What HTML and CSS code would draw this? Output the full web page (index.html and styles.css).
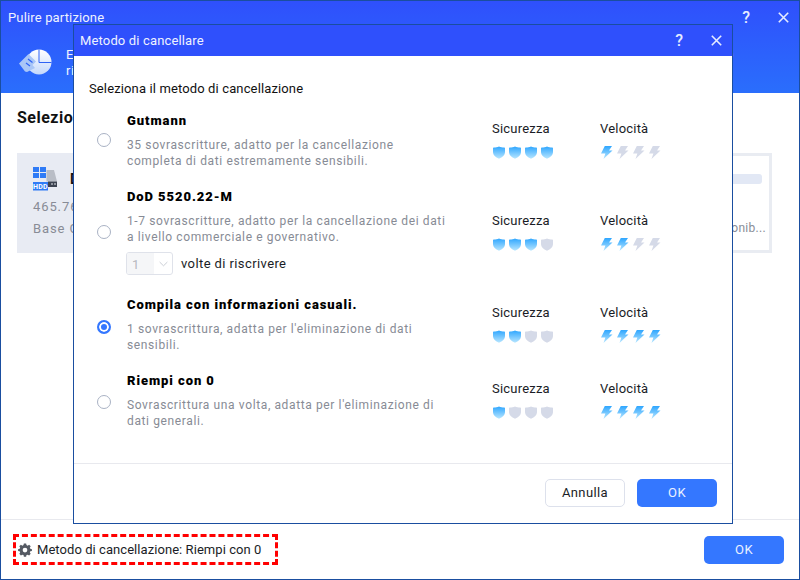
FILE: index.html
```html
<!DOCTYPE html>
<html lang="it">
<head>
<meta charset="utf-8">
<title>Pulire partizione</title>
<link rel="stylesheet" href="styles.css">
</head>
<body>
<svg class="defs" width="0" height="0" aria-hidden="true">
  <defs>
    <linearGradient id="gb" x1="0" y1="0" x2="0" y2="1">
      <stop offset="0" stop-color="#2ea6ff"/>
      <stop offset="1" stop-color="#b8e6ff"/>
    </linearGradient>
    <linearGradient id="gw" x1="0" y1="0" x2="0" y2="1">
      <stop offset="0" stop-color="#ffffff"/>
      <stop offset="1" stop-color="#c4d8fb"/>
    </linearGradient>
    <symbol id="shield" viewBox="0 0 12 13">
      <path d="M6 .4C7.5 1.1 9.5 1.4 11 1.4 11.6 1.4 12 1.8 12 2.4V6.2C12 9.2 9.5 11.3 6 12.7 2.5 11.3 0 9.2 0 6.2V2.4C0 1.8.4 1.4 1 1.4 2.5 1.4 4.5 1.1 6 .4Z"/>
    </symbol>
    <symbol id="bolt" viewBox="0 0 12 13">
      <path d="M3.8 0H11L8 4.6H11.5L2.5 13 4.4 7.6H0Z"/>
    </symbol>
  </defs>
</svg>
<div class="window">
  <header class="win-head">
    <div class="titlebar">
      <span class="title">Pulire partizione</span>
      <span class="controls">
        <span class="ctl">?</span>
        <svg class="close" viewBox="0 0 11 11"><path d="M.8.8 10.2 10.2M10.2.8.8 10.2"/></svg>
      </span>
    </div>
    <div class="intro">
      <svg class="intro-icon" viewBox="0 0 34 28">
        <circle class="pie-w" cx="21" cy="14" r="12.5"/>
        <path class="pie-l" d="M21 1.5V14.5H33.5"/>
        <path class="pie-t" d="M1 15.5 10.5 6 18 13.5 14.5 17 17 20 9 24 7 23.5Z"/>
        <path class="pie-d" d="M10 11 14.5 14.5M8 15 12 18"/>
      </svg>
      <div class="intro-text">
        <p class="intro-line"><span>E</span><span>)</span></p>
        <p class="intro-line">ri</p>
      </div>
    </div>
  </header>
  <main class="win-body">
    <h2 class="heading">Selezione</h2>
    <div class="cards">
      <div class="card-left">
        <div class="disk-head">
          <svg class="hdd" viewBox="0 0 24 24">
            <rect x="0" y="0" width="6" height="5" fill="#2f7bf6"/>
            <rect x="7" y="0" width="6" height="5" fill="#2f7bf6"/>
            <rect x="0" y="6" width="6" height="5" fill="#2f7bf6"/>
            <rect x="7" y="6" width="6" height="5" fill="#2f7bf6"/>
            <path d="M13.5 3H21L24 14.5H13.5Z" fill="#b9bdc6"/>
            <rect x="15" y="14.5" width="9" height="5.5" fill="#3c4250"/>
            <rect x="18" y="16.5" width="2" height="1" fill="#dfe3ea"/>
            <rect x="21" y="16.5" width="2" height="1" fill="#dfe3ea"/>
            <rect x="0" y="15" width="15" height="8.5" fill="#2f7bf6"/>
            <text x="7.5" y="22" class="hdd-t">HDD</text>
          </svg>
          <b class="disk-name">D</b>
        </div>
        <p class="disk-meta">465.76GB</p>
        <p class="disk-meta">Base GPT</p>
      </div>
      <div class="card-right">
        <div class="bar"></div>
        <p class="free">Disponib...</p>
      </div>
    </div>
  </main>
  <footer class="win-foot">
    <div class="method">
      <svg class="gear" viewBox="0 0 16 16"><path d="M6.7.5H9.3L9.7 2.4 11 3 12.7 2 14.5 3.8 13.5 5.4 14.1 6.7 15.9 7.1V9.1L14.1 9.5 13.5 10.9 14.5 12.4 12.7 14.2 11 13.3 9.7 13.8 9.3 15.7H6.7L6.3 13.8 5 13.3 3.3 14.2 1.5 12.4 2.5 10.9 1.9 9.5.1 9.1V7.1L1.9 6.7 2.5 5.4 1.5 3.8 3.3 2 5 3 6.3 2.4ZM8 5.4A2.7 2.7 0 1 0 8 10.8 2.7 2.7 0 1 0 8 5.4Z" fill-rule="evenodd"/></svg>
      <span>Metodo di cancellazione: Riempi con 0</span>
    </div>
    <button class="btn primary">OK</button>
  </footer>
</div>

<section class="dialog">
  <header class="dlg-head">
    <span class="title">Metodo di cancellare</span>
    <span class="controls">
      <span class="ctl">?</span>
      <svg class="close" viewBox="0 0 11 11"><path d="M.8.8 10.2 10.2M10.2.8.8 10.2"/></svg>
    </span>
  </header>
  <div class="dlg-body">
    <p class="lead">Seleziona il metodo di cancellazione</p>

    <div class="option o1">
      <span class="radio"></span>
      <div class="info">
        <h3 class="opt-title">Gutmann</h3>
        <p class="desc">35 sovrascritture, adatto per la cancellazione<br>completa di dati estremamente sensibili.</p>
      </div>
      <div class="rate">
        <span class="rate-label">Sicurezza</span>
        <div class="icons">
          <svg class="ic on"><use href="#shield"/></svg><svg class="ic on"><use href="#shield"/></svg><svg class="ic on"><use href="#shield"/></svg><svg class="ic on"><use href="#shield"/></svg>
        </div>
      </div>
      <div class="rate">
        <span class="rate-label">Velocità</span>
        <div class="icons">
          <svg class="ic on"><use href="#bolt"/></svg><svg class="ic"><use href="#bolt"/></svg><svg class="ic"><use href="#bolt"/></svg><svg class="ic"><use href="#bolt"/></svg>
        </div>
      </div>
    </div>

    <div class="option o2">
      <span class="radio"></span>
      <div class="info">
        <h3 class="opt-title">DoD 5520.22-M</h3>
        <p class="desc">1-7 sovrascritture, adatto per la cancellazione dei dati<br>a livello commerciale e governativo.</p>
        <div class="times">
          <span class="select"><span class="sel-val">1</span><span class="sel-arrow"><svg viewBox="0 0 10 6"><path d="M.7.8 5 5 9.3.8"/></svg></span></span>
          <span class="times-label">volte di riscrivere</span>
        </div>
      </div>
      <div class="rate">
        <span class="rate-label">Sicurezza</span>
        <div class="icons">
          <svg class="ic on"><use href="#shield"/></svg><svg class="ic on"><use href="#shield"/></svg><svg class="ic on"><use href="#shield"/></svg><svg class="ic"><use href="#shield"/></svg>
        </div>
      </div>
      <div class="rate">
        <span class="rate-label">Velocità</span>
        <div class="icons">
          <svg class="ic on"><use href="#bolt"/></svg><svg class="ic on"><use href="#bolt"/></svg><svg class="ic"><use href="#bolt"/></svg><svg class="ic"><use href="#bolt"/></svg>
        </div>
      </div>
    </div>

    <div class="option o3">
      <span class="radio checked"></span>
      <div class="info">
        <h3 class="opt-title">Compila con informazioni casuali.</h3>
        <p class="desc">1 sovrascrittura, adatta per l'eliminazione di dati<br>sensibili.</p>
      </div>
      <div class="rate">
        <span class="rate-label">Sicurezza</span>
        <div class="icons">
          <svg class="ic on"><use href="#shield"/></svg><svg class="ic on"><use href="#shield"/></svg><svg class="ic"><use href="#shield"/></svg><svg class="ic"><use href="#shield"/></svg>
        </div>
      </div>
      <div class="rate">
        <span class="rate-label">Velocità</span>
        <div class="icons">
          <svg class="ic on"><use href="#bolt"/></svg><svg class="ic on"><use href="#bolt"/></svg><svg class="ic on"><use href="#bolt"/></svg><svg class="ic on"><use href="#bolt"/></svg>
        </div>
      </div>
    </div>

    <div class="option o4">
      <span class="radio"></span>
      <div class="info">
        <h3 class="opt-title">Riempi con 0</h3>
        <p class="desc">Sovrascrittura una volta, adatta per l'eliminazione di<br>dati generali.</p>
      </div>
      <div class="rate">
        <span class="rate-label">Sicurezza</span>
        <div class="icons">
          <svg class="ic on"><use href="#shield"/></svg><svg class="ic"><use href="#shield"/></svg><svg class="ic"><use href="#shield"/></svg><svg class="ic"><use href="#shield"/></svg>
        </div>
      </div>
      <div class="rate">
        <span class="rate-label">Velocità</span>
        <div class="icons">
          <svg class="ic on"><use href="#bolt"/></svg><svg class="ic on"><use href="#bolt"/></svg><svg class="ic on"><use href="#bolt"/></svg><svg class="ic on"><use href="#bolt"/></svg>
        </div>
      </div>
    </div>
  </div>
  <footer class="dlg-foot">
    <button class="btn ghost">Annulla</button>
    <button class="btn primary">OK</button>
  </footer>
</section>
</body>
</html>
```
FILE: styles.css
```css
* { box-sizing: border-box; }
html, body { margin: 0; height: 100%; }
body {
  position: relative;
  width: 800px;
  height: 580px;
  overflow: hidden;
  background: #fff;
  font-family: Roboto, "Liberation Sans", sans-serif;
  font-size: 13px;
  color: #111;
}
p, h2, h3 { margin: 0; }
.defs { position: absolute; }

.window {
  display: flex;
  flex-direction: column;
  width: 800px;
  height: 580px;
  border: 1px solid #1a4ea0;
}
.win-head {
  height: 92px;
  background: linear-gradient(180deg, #2f50fc 0%, #2a6efc 100%);
  color: #f1f4ff;
}
.titlebar {
  display: flex;
  align-items: center;
  justify-content: space-between;
  height: 32px;
  padding-left: 7px;
}
.title { font-size: 13px; letter-spacing: .15px; color: #eef2ff; }
.controls { display: flex; align-items: center; }
.titlebar .controls { gap: 28px; padding-right: 10px; }
.ctl { font-size: 16px; font-weight: 500; color: #e6ecff; }
.close { width: 11px; height: 11px; }
.close path { stroke: #e6ecff; stroke-width: 1.6; fill: none; }

.intro { display: flex; align-items: flex-start; padding: 15px 0 0 17px; }
.intro-icon { width: 34px; height: 28px; flex: none; }
.pie-w { fill: url(#gw); }
.pie-t { fill: #a9c6f7; }
.pie-l { stroke: #2f63f5; stroke-width: 1; fill: none; }
.pie-d { stroke: #2f63f5; stroke-width: 1.2; fill: none; }
.intro-text { margin-left: 14px; width: 668px; margin-top: -1px; }
.intro-line { display: flex; justify-content: space-between; height: 16px; line-height: 16px; letter-spacing: .5px; }

.win-body { flex: 1; padding: 0 27px 0 16px; }
.heading { margin-top: 15px; font-size: 16px; font-weight: 700; letter-spacing: .5px; line-height: 20px; }
.cards { display: flex; justify-content: space-between; margin-top: 25px; height: 100px; }
.card-left { width: 400px; background: #e8ebf3; padding: 14px 0 0 16px; }
.disk-head { display: flex; align-items: center; gap: 13px; height: 24px; }
.hdd { width: 24px; height: 24px; }
.hdd-t { font-size: 7px; font-weight: 700; letter-spacing: .3px; fill: #fff; text-anchor: middle; font-family: Roboto, sans-serif; }
.disk-name { font-size: 14px; }
.disk-meta { color: #888c96; letter-spacing: .9px; line-height: 22px; }
.disk-meta:first-of-type { margin-top: 5px; }
.card-right { width: 300px; border: 3px solid #e9ecf2; background: #fff; position: relative; display: flex; flex-direction: column; align-items: flex-end; padding: 18px 7px 0 0; }
.bar { width: 290px; height: 10px; background: #e2e8f5; border-radius: 3px; }
.free { margin-top: 37px; margin-right: -4px; color: #888c96; letter-spacing: .3px; font-size: 12px; }

.win-foot {
  display: flex;
  align-items: center;
  justify-content: space-between;
  height: 60px;
  padding: 0 15px 0 12px;
  border-top: 1px solid #e8e9ee;
}
.method {
  display: flex;
  align-items: center;
  gap: 5px;
  width: 265px;
  height: 31px;
  padding-left: 2px;
  border: 3px dashed #f00;
  letter-spacing: .06px;
  color: #1a1d26;
}
.gear { width: 14px; height: 14px; fill: #555a63; flex: none; }

.btn {
  width: 80px;
  height: 28px;
  border-radius: 5px;
  font: inherit;
  letter-spacing: .4px;
  cursor: pointer;
}
.primary { background: #3477ff; border: none; color: #eaf1ff; }
.ghost { background: #fff; border: 1px solid #dde1ec; color: #1a1d26; }

.dialog {
  position: absolute;
  left: 73px;
  top: 24px;
  width: 660px;
  height: 500px;
  display: flex;
  flex-direction: column;
  background: #fff;
  border: 1px solid #1a4ea0;
}
.dlg-head {
  display: flex;
  align-items: center;
  justify-content: space-between;
  height: 31px;
  flex: none;
  padding: 0 10px 0 6px;
  background: #2f50fc;
}
.dlg-head .controls { gap: 28px; }
.dlg-body { flex: 1; padding: 25px 0 0 15px; }
.lead { line-height: 16px; letter-spacing: .13px; margin-bottom: 13px; }

.option { display: flex; align-items: center; }
.o1, .o3, .o4 { height: 76px; }
.o2 { height: 108px; }
.radio {
  flex: none;
  width: 14px;
  height: 14px;
  margin: 0 16px 16px 8px;
  border: 1px solid #a9b2c4;
  border-radius: 50%;
  background: #fff;
}
.o3 .radio { margin-bottom: 10px; }
.o4 .radio { margin-bottom: 12px; }
.radio.checked { border: 2px solid #3477ff; background: #3477ff; box-shadow: inset 0 0 0 2px #fff; }
.info { flex: none; width: 365px; align-self: flex-start; padding-top: 3px; }
.opt-title { font-size: 13px; font-weight: 900; letter-spacing: .93px; line-height: 16px; color: #000; }
.desc { margin-top: 8px; font-size: 12px; line-height: 16px; letter-spacing: .62px; color: #878b95; }
.times { display: flex; align-items: center; gap: 8px; margin: 7px 0 0 -1px; }
.select { display: flex; width: 47px; height: 23px; border: 1px solid #dfe2ea; border-radius: 3px; background: #fff; overflow: hidden; }
.sel-val { width: 27px; padding-left: 5px; line-height: 23px; background: #f5f6f8; color: #b5b8bf; }
.sel-arrow { flex: 1; display: flex; align-items: center; justify-content: center; }
.sel-arrow svg { width: 9px; height: 6px; fill: none; stroke: #c4c8d0; stroke-width: 1; }
.times-label { letter-spacing: .4px; color: #1a1d26; font-size: 13px; }

.rate { flex: none; width: 108px; display: flex; flex-direction: column; gap: 9px; margin-bottom: 16px; }
.rate-label { line-height: 16px; letter-spacing: .2px; color: #1a1d26; font-size: 13px; }
.icons { display: flex; gap: 4px; height: 13px; padding-left: 1px; }
.ic { width: 12px; height: 13px; fill: #d5dae8; }
.ic.on { fill: url(#gb); }

.dlg-foot {
  display: flex;
  justify-content: flex-end;
  align-items: center;
  gap: 12px;
  height: 60px;
  flex: none;
  padding: 0 15px 2px 0;
  border-top: 1px solid #e8e9ee;
}
```
